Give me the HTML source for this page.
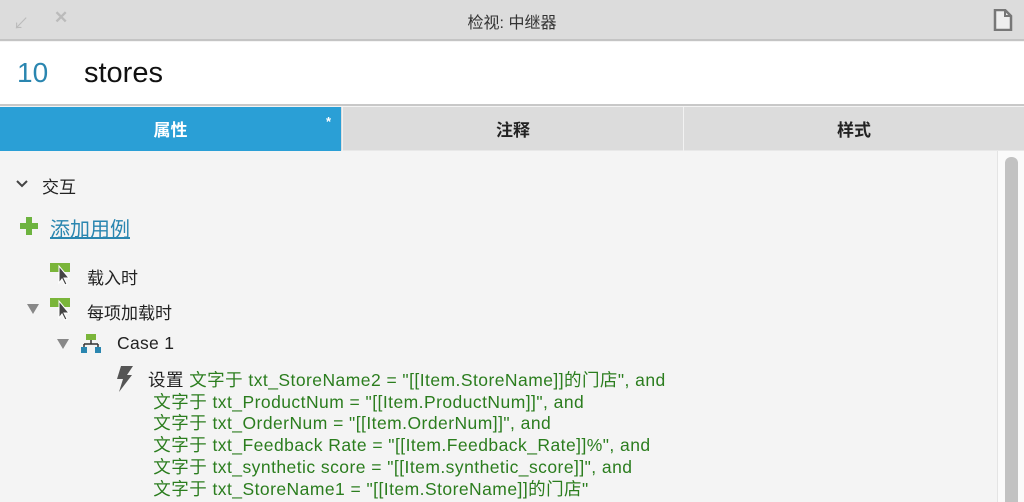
<!DOCTYPE html>
<html><head><meta charset="utf-8"><style>
*{margin:0;padding:0;box-sizing:border-box}
body{width:1024px;height:502px;overflow:hidden;background:#f4f4f4;font-family:"Liberation Sans","Noto Sans CJK SC",sans-serif;position:relative;color:#222}
.a{position:absolute;white-space:nowrap}
.g{color:#2b7d1e}
</style></head><body>
<div class="a" style="left:0;top:0;width:1024px;height:41px;background:#dcdcdc;border-bottom:2px solid #c4c4c4"></div>
<div class="a" style="left:13px;top:10px;color:#bbb;font-size:16px">↙</div>
<div class="a" style="left:54px;top:8px;color:#bbb;font-size:17px;font-weight:bold">✕</div>
<div class="a" style="left:0;width:1024px;top:9px;text-align:center;font-size:16px;color:#333">检视: 中继器</div>
<svg class="a" style="left:993px;top:9px" width="20" height="22"><path d="M2 1H12L18 7V21H2Z" fill="#eee" stroke="#777" stroke-width="2.5"/><path d="M12 1V7H18" fill="none" stroke="#777" stroke-width="2"/></svg>
<div class="a" style="left:0;top:42px;width:1024px;height:64px;background:#fff;border-bottom:2px solid #c8c8c8"></div>
<div class="a" style="left:17px;top:57px;font-size:28px;color:#2a86b0">10</div>
<div class="a" style="left:84px;top:57px;font-size:29px;color:#111">stores</div>
<div class="a" style="left:0;top:107px;width:1024px;height:44px;background:#dcdcdc;border-bottom:1px solid #e8e8e8"></div>
<div class="a" style="left:0;top:107px;width:341px;height:44px;background:#2a9fd6;color:#fff;font-size:17px;font-weight:bold;text-align:center;line-height:48px">属性</div>
<div class="a" style="left:326px;top:114px;color:#fff;font-size:13px;font-weight:bold">*</div>
<div class="a" style="left:342px;top:107px;width:341px;height:44px;border-left:1px solid #f2f2f2;font-size:17px;font-weight:bold;text-align:center;line-height:48px">注释</div>
<div class="a" style="left:683px;top:107px;width:341px;height:44px;border-left:1px solid #f2f2f2;font-size:17px;font-weight:bold;text-align:center;line-height:48px">样式</div>
<div class="a" style="left:997px;top:151px;width:27px;height:351px;background:#fafafa;border-left:1px solid #e4e4e4"></div>
<div class="a" style="left:1005px;top:157px;width:13px;height:345px;background:#c2c2c2;border-radius:6px 6px 0 0"></div>
<svg class="a" style="left:15px;top:179px" width="14" height="10"><path d="M2 2L7 7L12 2" fill="none" stroke="#444" stroke-width="2"/></svg>
<div class="a" style="left:42px;top:173px;font-size:17px">交互</div>
<div class="a" style="left:20px;top:223px;width:18px;height:6px;background:#6db33f"></div>
<div class="a" style="left:26px;top:217px;width:6px;height:18px;background:#6db33f"></div>
<div class="a" style="left:50px;top:213px;font-size:20px;color:#2a86b0;text-decoration:underline">添加用例</div>
<svg class="a" style="left:50px;top:262px" width="24" height="24"><rect x="0" y="1" width="20" height="9" fill="#7ab53a"/><path d="M9 4L9 21L12 17L15 23L17 22L14 16L19 16Z" fill="#444" stroke="#fff" stroke-width="1"/></svg>
<div class="a" style="left:87px;top:264px;font-size:17px">载入时</div>
<svg class="a" style="left:26px;top:303px" width="14" height="12"><path d="M1 1H13L7 11Z" fill="#888"/></svg>
<svg class="a" style="left:50px;top:297px" width="24" height="24"><rect x="0" y="1" width="20" height="9" fill="#7ab53a"/><path d="M9 4L9 21L12 17L15 23L17 22L14 16L19 16Z" fill="#444" stroke="#fff" stroke-width="1"/></svg>
<div class="a" style="left:87px;top:299px;font-size:17px">每项加载时</div>
<svg class="a" style="left:56px;top:338px" width="14" height="12"><path d="M1 1H13L7 11Z" fill="#888"/></svg>
<svg class="a" style="left:80px;top:334px" width="22" height="20"><rect x="6" y="0" width="10" height="6" fill="#7ab53a"/><path d="M11 6V10M4 10H18M4 10V14M18 10V14" stroke="#333" stroke-width="1.5" fill="none"/><rect x="1" y="13" width="6" height="6" fill="#2a86b0"/><rect x="15" y="13" width="6" height="6" fill="#2a86b0"/></svg>
<div class="a" style="left:117px;top:333px;font-size:17.5px;letter-spacing:0.3px">Case 1</div>
<svg class="a" style="left:113px;top:365px" width="22" height="28"><path d="M8 1H20L14 10H19L6 27L10 14H4Z" fill="#555"/></svg>
<div class="a" style="left:148px;top:370px;font-size:17.5px;line-height:21.7px;letter-spacing:0.45px">
<div><span style="color:#222">设置</span> <span class="g">文字于 txt_StoreName2 = "[[Item.StoreName]]的门店", and</span></div>
<div class="g">&nbsp;文字于 txt_ProductNum = "[[Item.ProductNum]]", and</div>
<div class="g">&nbsp;文字于 txt_OrderNum = "[[Item.OrderNum]]", and</div>
<div class="g">&nbsp;文字于 txt_Feedback Rate = "[[Item.Feedback_Rate]]%", and</div>
<div class="g">&nbsp;文字于 txt_synthetic score = "[[Item.synthetic_score]]", and</div>
<div class="g">&nbsp;文字于 txt_StoreName1 = "[[Item.StoreName]]的门店"</div>
</div>
</body></html>
